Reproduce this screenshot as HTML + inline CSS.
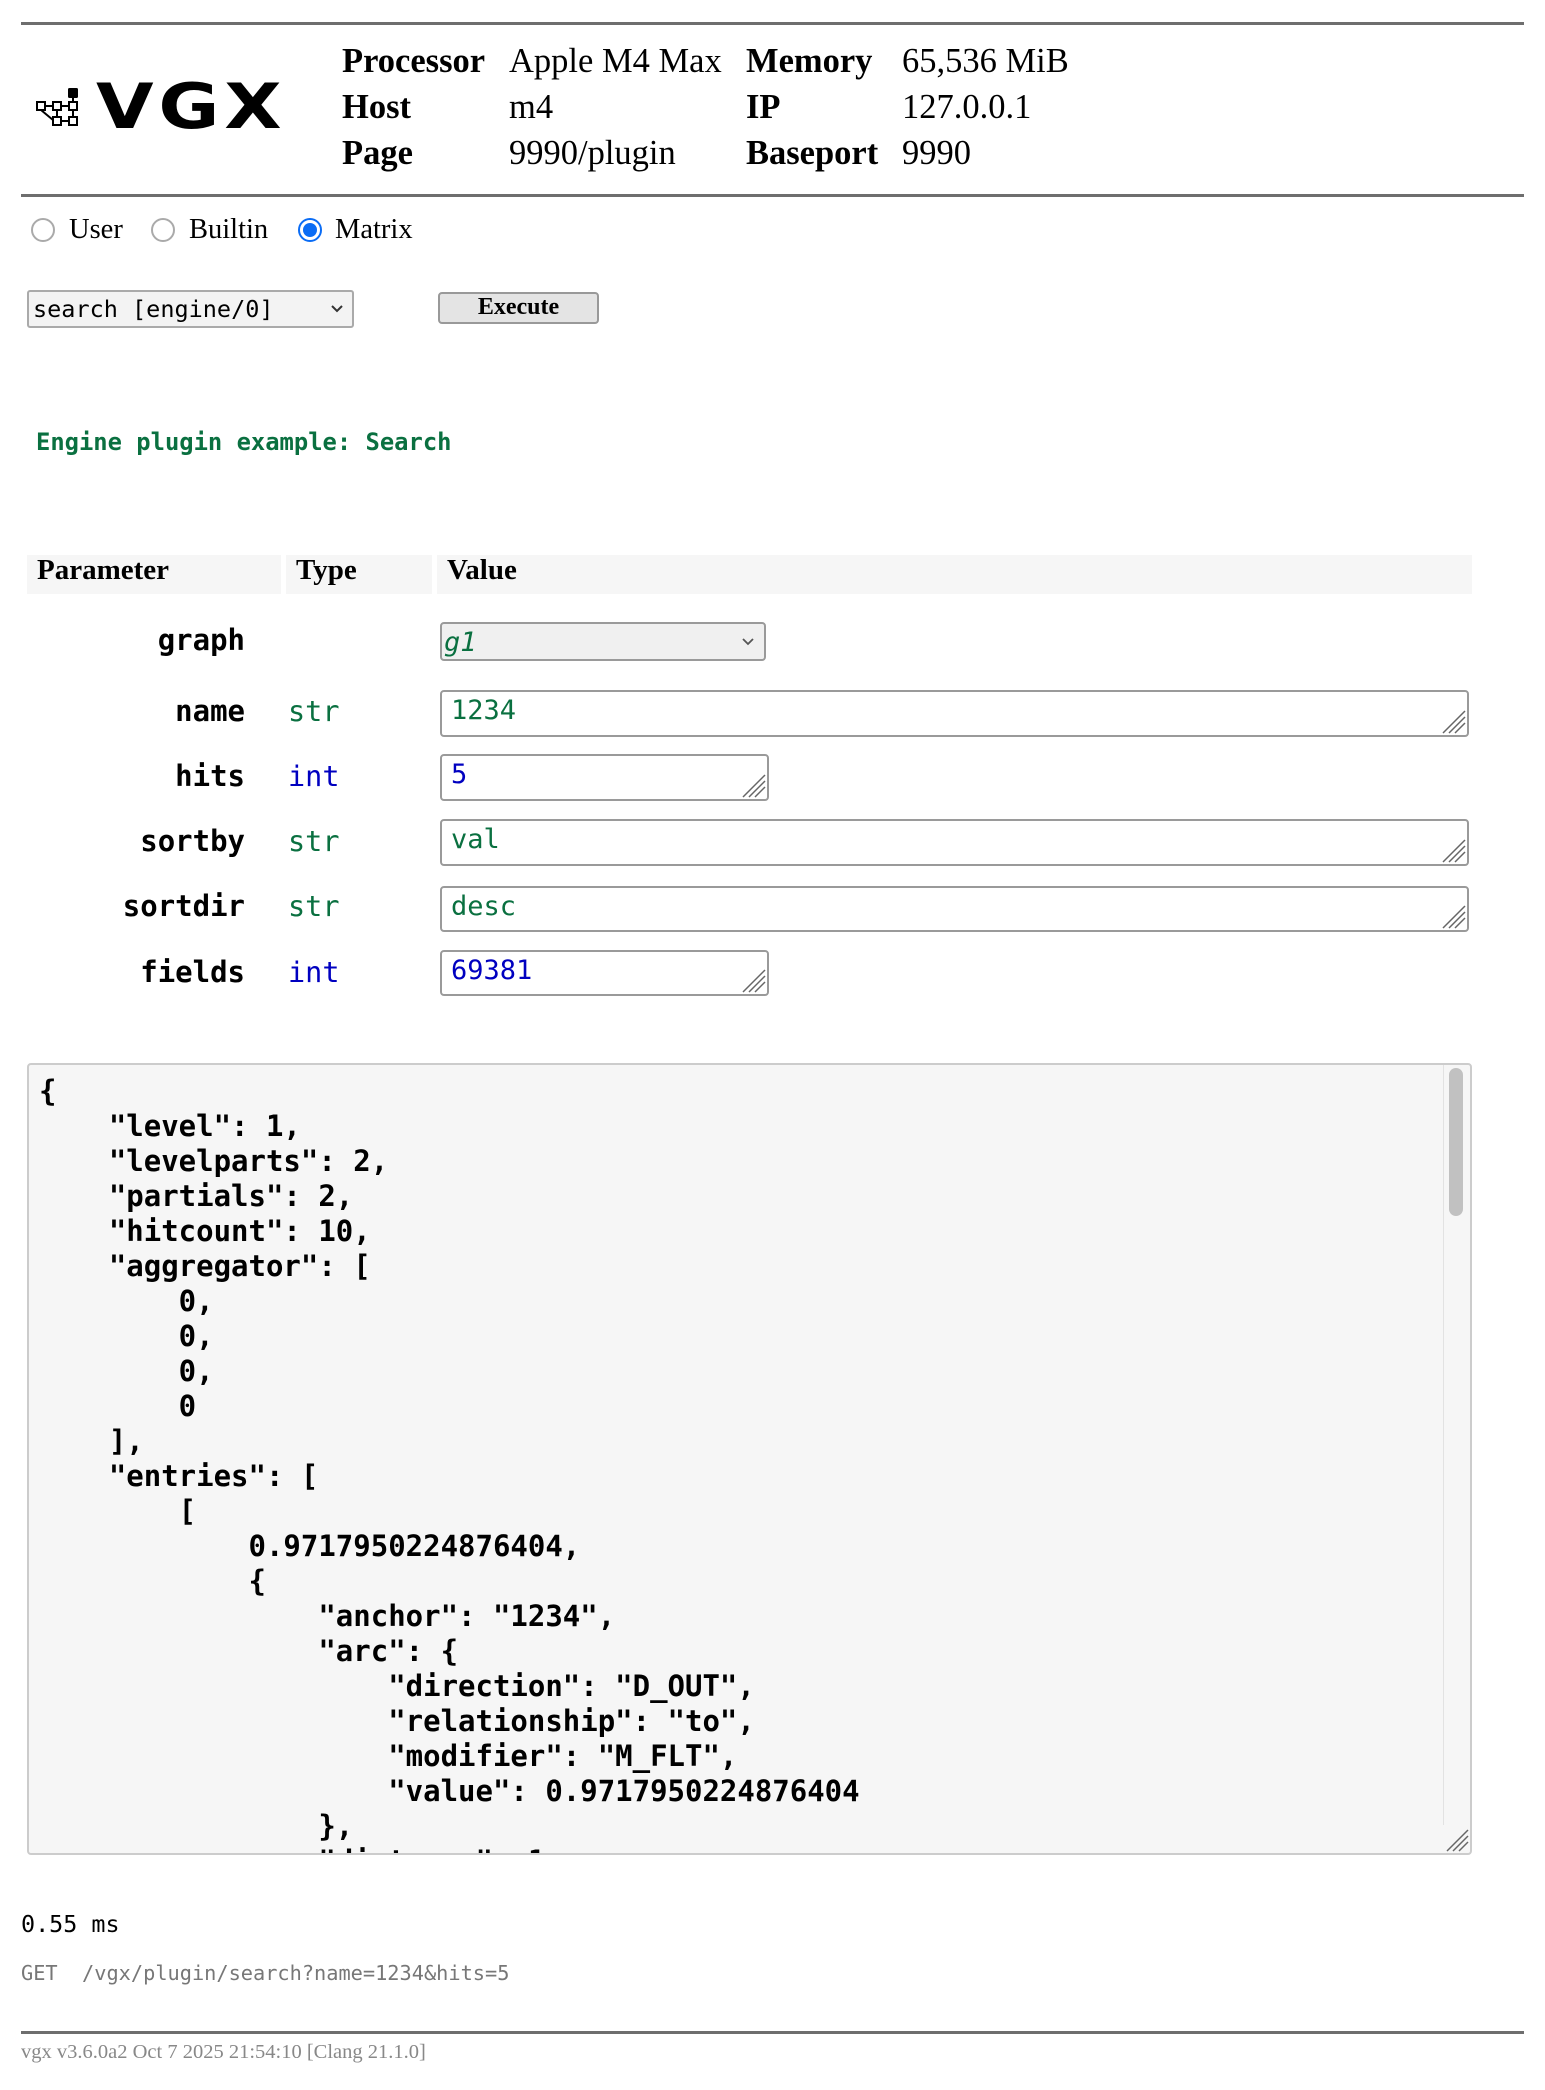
<!DOCTYPE html>
<html><head><meta charset="utf-8"><style>
*{box-sizing:border-box}
body{margin:0;width:1545px;height:2090px;background:#fff;position:relative;overflow:hidden;font-family:"Liberation Serif",serif;color:#000}
.a{position:absolute;white-space:pre}
.hr{position:absolute;left:21px;width:1503px;height:3px;background:#6e6e6e}
.hd{font-size:34.5px;line-height:40px}
.b{font-weight:bold}
.mono{font-family:"Liberation Mono","DejaVu Sans Mono",monospace}
.th{position:absolute;top:555px;height:39px;background:#f6f6f6;font:bold 29px "Liberation Serif",serif;padding:0 10px;line-height:30px}
.pl{position:absolute;right:1300px;font:bold 29px "DejaVu Sans Mono",monospace;white-space:pre}
.ty{position:absolute;left:288px;font:28.5px "DejaVu Sans Mono",monospace}
.box{position:absolute;left:440px;border:2px solid #9a9a9a;border-radius:4px;background:#fff;font:27px "DejaVu Sans Mono",monospace;padding:2px 9px;line-height:34px}
.g{color:#0a7040}.bl{color:#0000c0}
.radio{position:absolute;width:24px;height:24px;border-radius:50%;border:2px solid #aaa;background:#fff}
</style></head><body>
<div class="hr" style="top:22px"></div>
<svg class="a" style="left:30px;top:84px" width="60" height="48" viewBox="30 84 60 48">
<g fill="none" stroke="#000" stroke-width="2">
<rect x="37" y="102" width="8" height="8"/><rect x="53" y="102" width="8" height="8"/><rect x="69" y="102" width="8" height="8"/>
<rect x="53" y="117" width="8" height="8"/><rect x="69" y="117" width="8" height="8"/>
<path d="M45 106h8M61 106h8M41 110l12 10M57 110v7M73 98v4M73 110v7M61 121h8"/>
</g><rect x="68" y="88" width="10" height="10" rx="1.5" fill="#000"/></svg>
<div class="a" style="left:96px;top:70px;font:bold 62px 'DejaVu Sans',sans-serif;letter-spacing:4px;transform:scaleX(1.2);transform-origin:left">VGX</div>
<div class="a hd b" style="left:342px;top:41px">Processor</div>
<div class="a hd" style="left:509px;top:41px">Apple M4 Max</div>
<div class="a hd b" style="left:746px;top:41px">Memory</div>
<div class="a hd" style="left:902px;top:41px">65,536 MiB</div>
<div class="a hd b" style="left:342px;top:87px">Host</div>
<div class="a hd" style="left:509px;top:87px">m4</div>
<div class="a hd b" style="left:746px;top:87px">IP</div>
<div class="a hd" style="left:902px;top:87px">127.0.0.1</div>
<div class="a hd b" style="left:342px;top:133px">Page</div>
<div class="a hd" style="left:509px;top:133px">9990/plugin</div>
<div class="a hd b" style="left:746px;top:133px">Baseport</div>
<div class="a hd" style="left:902px;top:133px">9990</div>
<div class="hr" style="top:194px"></div>

<div class="radio" style="left:31px;top:218px"></div>
<div class="a" style="left:69px;top:214px;font-size:28.5px">User</div>
<div class="radio" style="left:151px;top:218px"></div>
<div class="a" style="left:189px;top:214px;font-size:28.5px">Builtin</div>
<div class="radio" style="left:298px;top:218px;border:2px solid #0a6cf5"><div style="position:absolute;left:3px;top:3px;width:14px;height:14px;border-radius:50%;background:#0a6cf5"></div></div>
<div class="a" style="left:335px;top:214px;font-size:28.5px">Matrix</div>

<div class="a mono" style="left:27px;top:290px;width:327px;height:38px;border:2px solid #aaa;border-radius:3px;background:#f3f3f3;font:23.5px 'DejaVu Sans Mono',monospace;line-height:34px;padding-left:4px">search [engine/0]</div>
<svg class="a" style="left:330px;top:304px" width="14" height="10"><path d="M2 2l5 5 5-5" fill="none" stroke="#333" stroke-width="2"/></svg>
<div class="a" style="left:438px;top:292px;width:161px;height:32px;border:2px solid #999;border-radius:4px;background:#e4e4e4;font:bold 24px 'Liberation Serif',serif;text-align:center;line-height:27px">Execute</div>

<div class="a b" style="left:36px;top:428px;font:bold 23.8px 'DejaVu Sans Mono',monospace;color:#0a7040">Engine plugin example: Search</div>

<div class="th" style="left:27px;width:254px">Parameter</div>
<div class="th" style="left:286px;width:146px">Type</div>
<div class="th" style="left:437px;width:1035px">Value</div>

<div class="pl" style="top:623px">graph</div>
<div class="box g" style="top:622px;width:326px;height:39px;background:#f0f0f0;font-style:italic;padding-left:2px;line-height:33px">g1</div>
<svg class="a" style="left:741px;top:637px" width="14" height="10"><path d="M2 2l5 5 5-5" fill="none" stroke="#555" stroke-width="1.8"/></svg>

<div class="pl" style="top:694px">name</div><div class="ty g" style="top:695px">str</div>
<div class="box g" style="top:690px;width:1029px;height:47px">1234</div>
<div class="pl" style="top:759px">hits</div><div class="ty bl" style="top:760px">int</div>
<div class="box bl" style="top:754px;width:329px;height:47px">5</div>
<div class="pl" style="top:824px">sortby</div><div class="ty g" style="top:825px">str</div>
<div class="box g" style="top:819px;width:1029px;height:47px">val</div>
<div class="pl" style="top:889px">sortdir</div><div class="ty g" style="top:890px">str</div>
<div class="box g" style="top:886px;width:1029px;height:46px">desc</div>
<div class="pl" style="top:955px">fields</div><div class="ty bl" style="top:956px">int</div>
<div class="box bl" style="top:950px;width:329px;height:46px">69381</div>

<svg class="a" style="left:0;top:0;pointer-events:none" width="1545" height="2090">
<g stroke="#666" stroke-width="1.5">
<path d="M1443 733l22-22M1449 733l16-16M1455 733l10-10"/>
<path d="M743 797l22-22M749 797l16-16M755 797l10-10"/>
<path d="M1443 862l22-22M1449 862l16-16M1455 862l10-10"/>
<path d="M1443 928l22-22M1449 928l16-16M1455 928l10-10"/>
<path d="M743 992l22-22M749 992l16-16M755 992l10-10"/>
</g></svg>

<div class="a" style="left:27px;top:1063px;width:1445px;height:792px;border:2px solid #ccc;border-radius:4px;background:#f6f6f6;overflow:hidden">
<pre style="margin:0;padding:0 0 0 10px;position:relative;top:-9px;font:bold 29px 'DejaVu Sans Mono',monospace;line-height:35px">{
    "level": 1,
    "levelparts": 2,
    "partials": 2,
    "hitcount": 10,
    "aggregator": [
        0,
        0,
        0,
        0
    ],
    "entries": [
        [
            0.9717950224876404,
            {
                "anchor": "1234",
                "arc": {
                    "direction": "D_OUT",
                    "relationship": "to",
                    "modifier": "M_FLT",
                    "value": 0.9717950224876404
                },
                "distance": 1,</pre>
<div style="position:absolute;left:1414px;top:0;width:1px;height:760px;background:#e2e2e2"></div>
<div style="position:absolute;left:1420px;top:3px;width:14px;height:148px;border-radius:7px;background:#c1c1c1"></div>
<svg style="position:absolute;right:1px;bottom:1px" width="24" height="24"><g stroke="#666" stroke-width="1.5"><path d="M2 23L23 2M8 23L23 8M14 23L23 14"/></g></svg>
</div>

<div class="a" style="left:21px;top:1910px;font:23.4px 'DejaVu Sans Mono',monospace">0.55 ms</div>
<div class="a" style="left:21px;top:1961px;font:20.3px 'DejaVu Sans Mono',monospace;color:#777">GET  /vgx/plugin/search?name=1234&amp;hits=5</div>
<div class="hr" style="top:2031px"></div>
<div class="a" style="left:21px;top:2041px;font:20.5px 'Liberation Serif',serif;color:#888">vgx v3.6.0a2 Oct 7 2025 21:54:10 [Clang 21.1.0]</div>
</body></html>
